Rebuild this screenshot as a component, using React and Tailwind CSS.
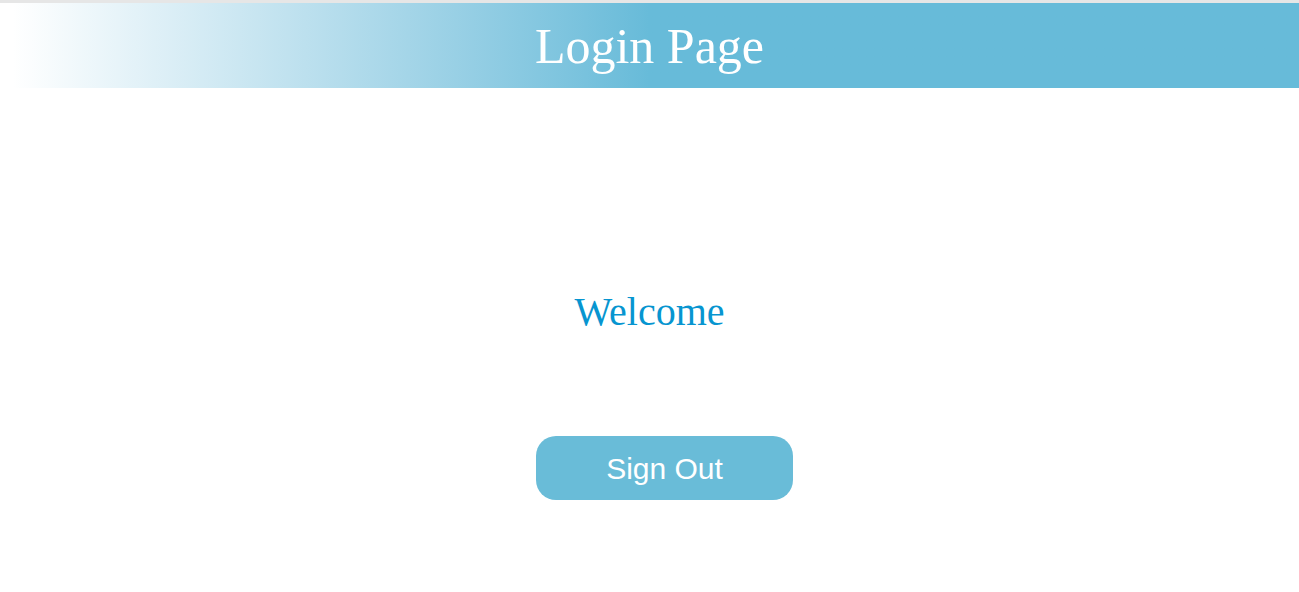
import React from 'react';

function App() {
  return (
    <div className="min-h-[592px] bg-white font-['Liberation_Serif',serif]">
      <div className="h-[3px] bg-[#e6e6e6]" />
      <header className="h-[85px] flex items-center justify-center bg-linear-to-r from-white from-[1%] to-[#67bbd9] to-50%">
        <h1 className="text-white text-[50px] leading-none">Login Page</h1>
      </header>

      <div className="flex justify-center mt-[204px]">
        <h2 className="text-[#0795d0] text-[40px] leading-none">Welcome</h2>
      </div>

      <div className="flex justify-center pl-[30px] mt-[104px]">
        <button
          type="button"
          className="w-[257px] h-[64px] rounded-[20px] bg-[#69bcd8] text-white text-[30px] font-['Liberation_Sans',sans-serif]"
        >
          Sign Out
        </button>
      </div>
    </div>
  );
}

export default App;
